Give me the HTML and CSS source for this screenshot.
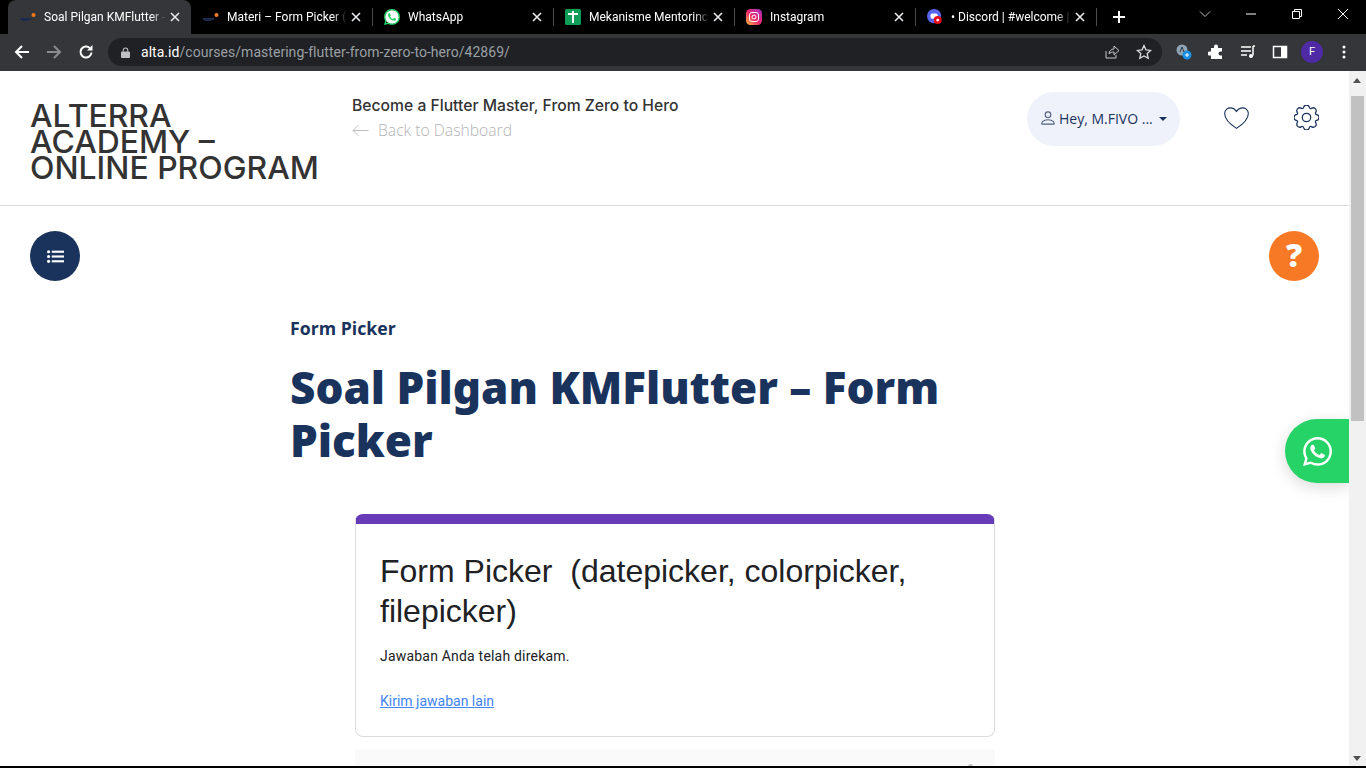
FILE: index.html
```html
<!DOCTYPE html>
<html lang="en">

<head>
    <meta charset="UTF-8">
    <title>Soal Pilgan KMFlutter</title>
    <link rel="stylesheet" href="styles.css">
</head>

<body>
    <div class="tab-strip">
        <div class="tab tab-active">
            <svg class="favicon" viewBox="0 0 16 16"><rect x="0" y="9" width="11" height="2" fill="#1c2a4d"/><rect x="2" y="11" width="6" height="1" fill="#1c2a4d"/><circle cx="13.5" cy="6" r="2" fill="#f47b20"/></svg>
            <span class="tab-title">Soal Pilgan KMFlutter -</span>
            <svg class="tab-close" viewBox="0 0 10 10"><path d="M1 1l8 8M9 1L1 9" stroke="#e8eaed" stroke-width="1.600"/></svg>
        </div>
        <div class="tab">
            <svg class="favicon" viewBox="0 0 16 16"><rect x="0" y="9" width="11" height="2" fill="#1c2a4d"/><rect x="2" y="11" width="6" height="1" fill="#1c2a4d"/><circle cx="13.5" cy="6" r="2" fill="#f47b20"/></svg>
            <span class="tab-title">Materi – Form Picker (</span>
            <svg class="tab-close" viewBox="0 0 10 10"><path d="M1 1l8 8M9 1L1 9" stroke="#e8eaed" stroke-width="1.600"/></svg>
        </div>
        <div class="tab tab-line">
            <svg class="favicon" viewBox="0 0 24 24"><circle cx="12" cy="12" r="10.5" fill="#fff"/><path fill="#25d366" d="M17.472 14.382c-.297-.149-1.758-.867-2.03-.967-.273-.099-.471-.148-.67.15-.197.297-.767.966-.94 1.164-.173.199-.347.223-.644.075-.297-.15-1.255-.463-2.39-1.475-.883-.788-1.48-1.761-1.653-2.059-.173-.297-.018-.458.13-.606.134-.133.298-.347.446-.52.149-.174.198-.298.298-.497.099-.198.05-.371-.025-.52-.075-.149-.669-1.612-.916-2.207-.242-.579-.487-.5-.669-.51-.173-.008-.371-.01-.57-.01-.198 0-.52.074-.792.372-.272.297-1.04 1.016-1.04 2.479 0 1.462 1.065 2.875 1.213 3.074.149.198 2.096 3.2 5.077 4.487.709.306 1.262.489 1.694.625.712.227 1.36.195 1.871.118.571-.085 1.758-.719 2.006-1.413.248-.694.248-1.289.173-1.413-.074-.124-.272-.198-.57-.347m-5.421 7.403h-.004a9.87 9.87 0 01-5.031-1.378l-.361-.214-3.741.982.998-3.648-.235-.374a9.86 9.86 0 01-1.51-5.26c.001-5.45 4.436-9.884 9.888-9.884 2.64 0 5.122 1.03 6.988 2.898a9.825 9.825 0 012.893 6.994c-.003 5.45-4.437 9.884-9.885 9.884m8.413-18.297A11.815 11.815 0 0012.05 0C5.495 0 .16 5.335.157 11.892c0 2.096.547 4.142 1.588 5.945L.057 24l6.305-1.654a11.882 11.882 0 005.683 1.448h.005c6.554 0 11.89-5.335 11.893-11.893a11.821 11.821 0 00-3.48-8.413z"/></svg>
            <span class="tab-title">WhatsApp</span>
            <svg class="tab-close" viewBox="0 0 10 10"><path d="M1 1l8 8M9 1L1 9" stroke="#e8eaed" stroke-width="1.600"/></svg>
        </div>
        <div class="tab tab-line">
            <svg class="favicon" viewBox="0 0 16 16"><rect width="16" height="16" rx="1.500" fill="#0f9d58"/><path fill="#fff" d="M7 2h2v2h4v2H9v8H7V6H3V4h4z"/></svg>
            <span class="tab-title">Mekanisme Mentorinc</span>
            <svg class="tab-close" viewBox="0 0 10 10"><path d="M1 1l8 8M9 1L1 9" stroke="#e8eaed" stroke-width="1.600"/></svg>
        </div>
        <div class="tab tab-line">
            <svg class="favicon" viewBox="0 0 16 16"><defs><linearGradient id="insta" x1="0" y1="1" x2="1" y2="0"><stop offset="0" stop-color="#fdc13a"/><stop offset=".45" stop-color="#ee2a6b"/><stop offset="1" stop-color="#a32bc4"/></linearGradient></defs><rect width="16" height="16" rx="4.500" fill="url(#insta)"/><rect x="3.500" y="3.500" width="9" height="9" rx="2.500" fill="none" stroke="#fff"/><circle cx="8" cy="8" r="2" fill="none" stroke="#fff"/></svg>
            <span class="tab-title">Instagram</span>
            <svg class="tab-close" viewBox="0 0 10 10"><path d="M1 1l8 8M9 1L1 9" stroke="#e8eaed" stroke-width="1.600"/></svg>
        </div>
        <div class="tab tab-line">
            <svg class="favicon" viewBox="0 0 18 18"><circle cx="8" cy="8" r="8" fill="#5865f2"/><rect x="4" y="5" width="8" height="6" rx="2" fill="#fff"/><circle cx="12" cy="12.5" r="4.5" fill="#e3101a"/><circle cx="12" cy="12.5" r="1.5" fill="#fff"/></svg>
            <span class="tab-title">• Discord | #welcome |</span>
            <svg class="tab-close" viewBox="0 0 10 10"><path d="M1 1l8 8M9 1L1 9" stroke="#e8eaed" stroke-width="1.600"/></svg>
        </div>
        <div class="tab-end">
            <svg class="new-tab" viewBox="0 0 12 12"><path d="M6 0v12M0 6h12" stroke="#fff" stroke-width="2"/></svg>
        </div>
        <div class="window-btns">
            <svg viewBox="0 0 12 12"><path d="M1 3.500l5 5 5-5" fill="none" stroke="#bbb"/></svg>
            <svg viewBox="0 0 12 12"><path d="M1 6h10" stroke="#fff"/></svg>
            <svg viewBox="0 0 12 12"><path d="M1.500 3.500h7v7h-7zM3.500 3.500v-2h7v7h-2" fill="none" stroke="#fff"/></svg>
            <svg viewBox="0 0 12 12"><path d="M1 1l10 10M11 1L1 11" stroke="#fff"/></svg>
        </div>
    </div>

    <div class="toolbar">
        <svg class="tool-icon" viewBox="0 0 16 16"><path d="M15 8H2M8 2L2 8l6 6" fill="none" stroke="#fff" stroke-width="2"/></svg>
        <svg class="tool-icon" viewBox="0 0 16 16"><path d="M1 8h13M8 2l6 6-6 6" fill="none" stroke="#8b8c8e" stroke-width="2"/></svg>
        <svg class="tool-icon" viewBox="0 0 16 16"><path d="M13.500 8.500a5.500 5.500 0 1 1-1.600-4.400" fill="none" stroke="#fff" stroke-width="2"/><path d="M14.500 1v5.500H9z" fill="#fff"/></svg>
        <div class="omnibox">
            <svg class="lock" viewBox="0 0 10 12"><path d="M2.500 5V3.500a2.500 2.500 0 0 1 5 0V5" fill="none" stroke="#bdc1c6" stroke-width="1.200"/><rect y="5" width="10" height="7" rx="1" fill="#bdc1c6"/></svg>
            <span class="url"><b>alta.id</b>/courses/mastering-flutter-from-zero-to-hero/42869/</span>
            <svg class="omni-icon" viewBox="0 0 16 16"><path d="M2 7v7h10v-3M5 10c0-3 2-5 5-5V2l5 4.500L10 11V8c-2 0-4 .5-5 2z" fill="none" stroke="#c4c7c5"/></svg>
            <svg class="omni-icon" viewBox="0 0 16 16"><path d="M8 1.500l2 4.400 4.700.5-3.500 3.200 1 4.700L8 11.900l-4.200 2.400 1-4.700L1.300 6.400 6 5.900z" fill="none" stroke="#dadce0" stroke-width="1.300"/></svg>
        </div>
        <div class="ext-icons">
            <svg viewBox="0 0 16 16"><circle cx="6" cy="6" r="5.500" fill="#8ea4b5"/><circle cx="11" cy="11" r="4.500" fill="#1a8fe3"/><path d="M9 11h4M11 9v4" stroke="#fff"/><path d="M4 8l2-5 2 5" fill="none" stroke="#35363a"/></svg>
            <svg viewBox="0 0 16 16"><path fill="#fff" d="M6 2.500a2 2 0 0 1 4 0V4h4v3.500h-1.500a2 2 0 0 0 0 4H14V15H3v-3.500H1.500a2 2 0 0 1 0-4H3V4h3z"/></svg>
            <svg viewBox="0 0 16 16"><path d="M1 3h10M1 7h10M1 11h6" stroke="#fff" stroke-width="1.500"/><path d="M13 2v9.500" stroke="#fff" stroke-width="1.500"/><circle cx="11" cy="12" r="2" fill="#fff"/><path d="M13 2h2" stroke="#fff" stroke-width="1.500"/></svg>
            <svg viewBox="0 0 16 16"><rect x="1.500" y="2.500" width="13" height="11" fill="none" stroke="#fff" stroke-width="1.500"/><rect x="9" y="3" width="5" height="10" fill="#fff"/></svg>
            <span class="avatar">F</span>
            <svg viewBox="0 0 16 16"><circle cx="8" cy="3" r="1.500" fill="#fff"/><circle cx="8" cy="8" r="1.500" fill="#fff"/><circle cx="8" cy="13" r="1.500" fill="#fff"/></svg>
        </div>
    </div>

    <div class="viewport">
        <div class="page">
            <header class="site-header">
                <div class="logo">ALTERRA<br>ACADEMY –<br>ONLINE PROGRAM</div>
                <div class="course-info">
                    <div class="course-name">Become a Flutter Master, From Zero to Hero</div>
                    <a class="back-link">
                        <svg viewBox="0 0 16 16"><path d="M15.500 8H1M6 3L1 8l5 5" fill="none" stroke="#b4b4b4" stroke-width=".8"/></svg>
                        Back to Dashboard
                    </a>
                </div>
                <div class="user-pill">
                    <svg viewBox="0 0 16 16"><path fill="#4f6080" d="M8 8a3 3 0 1 0 0-6 3 3 0 0 0 0 6zm2-3a2 2 0 1 1-4 0 2 2 0 0 1 4 0zm4 8c0 1-1 1-1 1H3s-1 0-1-1 1-4 6-4 6 3 6 4zm-1-.004c-.001-.246-.154-.986-.832-1.664C11.516 10.680 10.289 10 8 10c-2.290 0-3.516.680-4.168 1.332-.678.678-.830 1.418-.832 1.664h10z"/></svg>
                    <span>Hey, M.FIVO ...</span>
                    <i class="caret"></i>
                </div>
                <svg class="head-icon heart" viewBox="0 0 16 16"><path fill="none" stroke="#1a335d" stroke-width=".7" d="M8 14.300C-3.500 7 .5 .8 4.500 1.200 6 1.400 7.300 2.200 8 3.500 8.700 2.200 10 1.400 11.500 1.200 15.500 .8 19.500 7 8 14.300z"/></svg>
                <svg class="head-icon gear" viewBox="0 0 16 16"><circle cx="8" cy="8" r="2.700" fill="none" stroke="#1a335d" stroke-width=".8"/><path fill="none" stroke="#1a335d" stroke-width=".8" d="M9.796 1.343c-.527-1.790-3.065-1.790-3.592 0l-.094.319a.873.873 0 0 1-1.255.520l-.292-.160c-1.640-.892-3.433.902-2.540 2.541l.159.292a.873.873 0 0 1-.520 1.255l-.319.094c-1.790.527-1.790 3.065 0 3.592l.319.094a.873.873 0 0 1 .520 1.255l-.160.292c-.892 1.640.901 3.434 2.541 2.540l.292-.159a.873.873 0 0 1 1.255.520l.094.319c.527 1.790 3.065 1.790 3.592 0l.094-.319a.873.873 0 0 1 1.255-.520l.292.160c1.640.893 3.434-.902 2.540-2.541l-.159-.292a.873.873 0 0 1 .520-1.255l.319-.094c1.790-.527 1.790-3.065 0-3.592l-.319-.094a.873.873 0 0 1-.520-1.255l.160-.292c.893-1.640-.902-3.433-2.541-2.540l-.292.159a.873.873 0 0 1-1.255-.520z"/></svg>
            </header>

            <div class="action-row">
                <button class="round-btn menu-btn">
                    <svg viewBox="0 0 16 14"><g fill="#fff"><rect y="1" width="3" height="3" rx="1.500"/><rect y="5.500" width="3" height="3" rx="1.500"/><rect y="10" width="3" height="3" rx="1.500"/><rect x="4.500" y="1.500" width="11.500" height="2"/><rect x="4.500" y="6" width="11.500" height="2"/><rect x="4.500" y="10.500" width="11.500" height="2"/></g></svg>
                </button>
                <button class="round-btn help-btn">?</button>
            </div>

            <main class="lesson">
                <div class="lesson-section">Form Picker</div>
                <h1 class="lesson-title">Soal Pilgan KMFlutter – Form Picker</h1>
                <div class="form-card">
                    <div class="form-title">Form Picker &nbsp;(datepicker, colorpicker, filepicker)</div>
                    <p class="form-msg">Jawaban Anda telah direkam.</p>
                    <a class="form-link">Kirim jawaban lain</a>
                </div>
                <div class="form-footer"></div>
            </main>

            <a class="wa-btn">
                <svg viewBox="0 0 24 24"><path fill="#fff" d="M17.472 14.382c-.297-.149-1.758-.867-2.030-.967-.273-.099-.471-.148-.670.150-.197.297-.767.966-.940 1.164-.173.199-.347.223-.644.075-.297-.150-1.255-.463-2.390-1.475-.883-.788-1.480-1.761-1.653-2.059-.173-.297-.018-.458.130-.606.134-.133.298-.347.446-.520.149-.174.198-.298.298-.497.099-.198.050-.371-.025-.520-.075-.149-.669-1.612-.916-2.207-.242-.579-.487-.500-.669-.510-.173-.008-.371-.010-.570-.010-.198 0-.520.074-.792.372-.272.297-1.040 1.016-1.040 2.479 0 1.462 1.065 2.875 1.213 3.074.149.198 2.096 3.200 5.077 4.487.709.306 1.262.489 1.694.625.712.227 1.360.195 1.871.118.571-.085 1.758-.719 2.006-1.413.248-.694.248-1.289.173-1.413-.074-.124-.272-.198-.570-.347m-5.421 7.403h-.004a9.870 9.870 0 01-5.031-1.378l-.361-.214-3.741.982.998-3.648-.235-.374a9.860 9.860 0 01-1.510-5.260c.001-5.450 4.436-9.884 9.888-9.884 2.640 0 5.122 1.030 6.988 2.898a9.825 9.825 0 012.893 6.994c-.003 5.450-4.437 9.884-9.885 9.884m8.413-18.297A11.815 11.815 0 0012.050 0C5.495 0 .160 5.335.157 11.892c0 2.096.547 4.142 1.588 5.945L.057 24l6.305-1.654a11.882 11.882 0 005.683 1.448h.005c6.554 0 11.890-5.335 11.893-11.893a11.821 11.821 0 00-3.480-8.413z"/></svg>
            </a>
        </div>
        <div class="scrollbar">
            <i class="arrow-up"></i>
            <div class="thumb"></div>
            <i class="arrow-down"></i>
        </div>
    </div>
</body>

</html>
```

FILE: styles.css
```css
* {
    margin: 0;
    padding: 0;
    box-sizing: border-box;
}

body {
    height: 768px;
    overflow: hidden;
    display: flex;
    flex-direction: column;
    background-color: #000;
    font-family: "Open Sans", sans-serif;
}

/* browser chrome */
.tab-strip {
    height: 34px;
    display: flex;
    align-items: stretch;
    padding-left: 10px;
    background-color: #000;
    flex-shrink: 0;
}

.tab {
    width: 181px;
    display: flex;
    align-items: center;
    padding: 0 8px 0 12px;
    color: #fff;
    font-family: "Roboto", sans-serif;
    font-size: 12px;
    position: relative;
}

.tab-active {
    background-color: #35363a;
    border-radius: 8px 8px 0 0;
    margin-left: -2px;
    width: 183px;
}

.tab-line::before {
    content: "";
    position: absolute;
    left: 0;
    top: 8px;
    height: 18px;
    width: 1px;
    background-color: #4a4b4e;
}

.favicon {
    width: 16px;
    height: 16px;
    flex-shrink: 0;
    margin-right: 8px;
}

.tab-title {
    flex: 1;
    white-space: nowrap;
    overflow: hidden;
    -webkit-mask-image: linear-gradient(to right, #000 88%, transparent);
    mask-image: linear-gradient(to right, #000 88%, transparent);
}

.tab-close {
    width: 10px;
    height: 10px;
    margin: 0 3px 0 4px;
    flex-shrink: 0;
}

.tab-end {
    width: 46px;
    display: flex;
    align-items: center;
    justify-content: center;
    position: relative;
}

.tab-end::before {
    content: "";
    position: absolute;
    left: 0;
    top: 8px;
    height: 18px;
    width: 1px;
    background-color: #4a4b4e;
}

.new-tab {
    width: 12px;
    height: 12px;
}

.window-btns {
    margin-left: auto;
    display: flex;
    align-items: flex-start;
    gap: 34px;
    padding: 8px 17px 0 0;
}

.window-btns svg {
    width: 12px;
    height: 12px;
}

.toolbar {
    height: 37px;
    display: flex;
    align-items: center;
    background-color: #35363a;
    padding: 0 0 1px 14px;
    flex-shrink: 0;
}

.tool-icon {
    width: 16px;
    height: 16px;
    margin-right: 16px;
}

.omnibox {
    width: 1054px;
    height: 28px;
    margin-left: -2px;
    display: flex;
    align-items: center;
    border-radius: 14px;
    background-color: #202124;
    padding: 0 10px 0 13px;
}

.lock {
    width: 9px;
    height: 11px;
    margin-right: 11px;
}

.url {
    flex: 1;
    color: #9aa0a6;
    font-family: "Roboto", sans-serif;
    font-size: 14px;
    letter-spacing: 0.04px;
    white-space: nowrap;
}

.url b {
    color: #fff;
    font-weight: 400;
}

.omni-icon {
    width: 16px;
    height: 16px;
    margin-left: 16px;
}

.ext-icons {
    display: flex;
    align-items: center;
    gap: 16px;
    margin-left: 14px;
}

.ext-icons svg {
    width: 16px;
    height: 16px;
}

.avatar {
    width: 22px;
    height: 22px;
    margin: 0 -3px;
    border-radius: 50%;
    background-color: #4f2aa5;
    color: #fff;
    font-family: "Roboto", sans-serif;
    font-size: 11px;
    line-height: 22px;
    text-align: center;
}

/* page */
.viewport {
    height: 695px;
    display: flex;
    background-color: #fff;
    flex-shrink: 0;
}

.page {
    flex: 1;
    position: relative;
    overflow: hidden;
}

.site-header {
    height: 135px;
    display: flex;
    align-items: flex-start;
    padding: 21px 30px 0;
    border-bottom: 1px solid #dcdcdc;
}

.logo {
    width: 322px;
    padding-top: 11px;
    font-family: "Inter", sans-serif;
    font-size: 31.9px;
    font-weight: 500;
    line-height: 26px;
    color: #333;
}

.course-info {
    width: 675px;
}

.course-name {
    padding-top: 1px;
    font-family: "Inter", sans-serif;
    font-size: 15.7px;
    line-height: 25px;
    font-weight: 500;
    color: #333;
}

.back-link {
    display: flex;
    align-items: center;
    gap: 9px;
    font-size: 15.7px;
    font-weight: 300;
    line-height: 24px;
    color: #b4b4b4;
}

.back-link svg {
    width: 17px;
    height: 17px;
}

.user-pill {
    width: 153px;
    height: 54px;
    display: flex;
    align-items: center;
    padding: 0 0 2px 12px;
    border-radius: 27px;
    background-color: #eff2fa;
    color: #1a335d;
    font-size: 14px;
}

.user-pill svg {
    width: 18px;
    height: 18px;
    margin-right: 2px;
}

.caret {
    border-top: 4px solid #1a335d;
    border-left: 4px solid transparent;
    border-right: 4px solid transparent;
    margin: 2px 0 0 6px;
}

.head-icon {
    width: 25px;
    height: 25px;
    margin-top: 13px;
}

.heart {
    margin: 14px 0 0 44px;
}

.gear {
    margin-left: 45px;
}

.action-row {
    display: flex;
    justify-content: space-between;
    padding: 25px 30px 0;
}

.round-btn {
    width: 50px;
    height: 50px;
    display: flex;
    align-items: center;
    justify-content: center;
    border: 0;
    border-radius: 50%;
    color: #fff;
    font-family: "Open Sans", sans-serif;
}

.round-btn svg {
    width: 17px;
    height: 15px;
}

.menu-btn {
    background-color: #1a335d;
}

.help-btn {
    padding-bottom: 3px;
    background-color: #f77825;
    font-size: 32px;
    font-weight: 800;
}

.lesson {
    margin: 35px 0 0 290px;
    width: 705px;
}

.lesson-section {
    font-size: 17.7px;
    font-weight: 700;
    line-height: 24px;
    color: #1a335d;
}

.lesson-title {
    margin-top: 21px;
    font-family: "Noto Sans", sans-serif;
    font-size: 44px;
    font-weight: 900;
    line-height: 53px;
    color: #1a335d;
}

.form-card {
    margin: 47px 0 0 65px;
    width: 640px;
    height: 223px;
    padding: 37px 24px 0;
    border: 1px solid #dadce0;
    border-top: 10px solid #673ab7;
    border-radius: 8px;
    font-family: "Roboto", sans-serif;
    color: #202124;
}

.form-title {
    font-family: "Liberation Sans", sans-serif;
    font-size: 32px;
    line-height: 40px;
    margin-top: -10px;
}

.form-msg {
    margin-top: 15px;
    font-size: 14px;
    line-height: 20px;
    letter-spacing: 0.2px;
}

.form-link {
    display: block;
    margin-top: 25px;
    font-size: 14px;
    line-height: 20px;
    color: #4285f4;
    text-decoration: underline;
}

.form-footer {
    margin: 12px 0 0 65px;
    width: 640px;
    height: 40px;
    background-color: #fafafa;
    position: relative;
}

.form-footer::after {
    content: "";
    position: absolute;
    left: 613px;
    top: 15px;
    width: 5px;
    height: 5px;
    border-radius: 2px 2px 0 0;
    background-color: #c8c8c8;
}

.wa-btn {
    position: absolute;
    right: 0;
    top: 348px;
    width: 64px;
    height: 64px;
    display: flex;
    align-items: center;
    justify-content: center;
    border-radius: 32px 0 0 32px;
    background-color: #25d366;
    box-shadow: 0 4px 16px rgba(0, 0, 0, 0.15);
}

.wa-btn svg {
    width: 29px;
    height: 29px;
}

.scrollbar {
    width: 17px;
    position: relative;
    background-color: #f1f1f1;
}

.thumb {
    width: 13px;
    height: 325px;
    margin: 25px 0 0 2px;
    background-color: #c1c1c1;
}

.arrow-up,
.arrow-down {
    position: absolute;
    left: 4px;
    border-left: 4px solid transparent;
    border-right: 4px solid transparent;
}

.arrow-up {
    top: 7px;
    border-bottom: 5px solid #505050;
}

.arrow-down {
    bottom: 5px;
    border-top: 5px solid #505050;
}
```
